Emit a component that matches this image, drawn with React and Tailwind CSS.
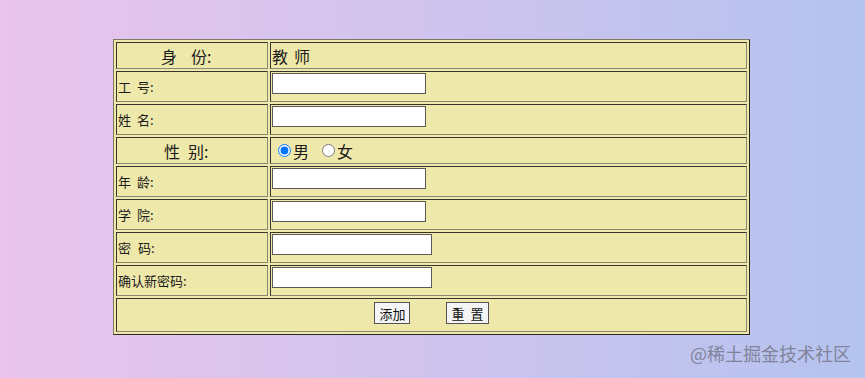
import React from "react";

const font = { fontFamily: '"Noto Sans CJK SC", "Microsoft YaHei", "Noto Sans", sans-serif' };

function Label({ a, b, gap }) {
  return (
    <span className="inline-flex items-center">
      <span>{a}</span>
      <span style={{ marginLeft: gap }}>{b}</span>
    </span>
  );
}

function TextInput({ w = "w-[154px]", type = "text" }) {
  return (
    <input
      type={type}
      className={`${w} h-[21px] bg-white border border-[#5b5b55] block outline-none`}
    />
  );
}

const cell = "border border-[#8a8672] [border-style:inset] p-0";

export default function App() {
  return (
    <div
      className="relative w-full h-[378px] bg-linear-to-r from-[#e9c4ec] to-[#b4c3ef] overflow-hidden"
      style={font}
    >
      <div className="pt-[39px] pl-[113px]">
        <table className="w-[637px] border-separate border-spacing-[2px] border border-[#7c7862] [border-style:outset] bg-[#eee8aa] text-[#1a1a1a]">
          <tbody>
            <tr>
              <td className={`${cell} w-[152px] h-[27px] pl-[44px] text-[16px] leading-none`}>
                <Label a="身" b="份:" gap="14px" />
              </td>
              <td className={`${cell} h-[27px] pl-[1px] text-[16px] leading-none`}>
                <Label a="教" b="师" gap="6px" />
              </td>
            </tr>
            <tr>
              <td className={`${cell} h-[31px] pl-[1px] text-[13px] leading-none`}>
                <Label a="工" b="号:" gap="6px" />
              </td>
              <td className={`${cell} h-[31px] pl-[1px] pt-[1px] align-top`}>
                <TextInput />
              </td>
            </tr>
            <tr>
              <td className={`${cell} h-[31px] pl-[1px] text-[13px] leading-none`}>
                <Label a="姓" b="名:" gap="6px" />
              </td>
              <td className={`${cell} h-[31px] pl-[1px] pt-[1px] align-top`}>
                <TextInput />
              </td>
            </tr>
            <tr>
              <td className={`${cell} h-[27px] pl-[47px] text-[16px] leading-none`}>
                <Label a="性" b="别:" gap="8px" />
              </td>
              <td className={`${cell} h-[27px] pl-[1px] text-[16px] leading-none`}>
                <span className="inline-flex items-center">
                  <input type="radio" name="sex" defaultChecked className="w-[13px] h-[13px] ml-[6px] mr-[2px] accent-[#0075ff]" />
                  <span>男</span>
                  <input type="radio" name="sex" className="w-[13px] h-[13px] ml-[13px] mr-[2px]" />
                  <span>女</span>
                </span>
              </td>
            </tr>
            <tr>
              <td className={`${cell} h-[31px] pl-[1px] text-[13px] leading-none`}>
                <Label a="年" b="龄:" gap="6px" />
              </td>
              <td className={`${cell} h-[31px] pl-[1px] pt-[1px] align-top`}>
                <TextInput />
              </td>
            </tr>
            <tr>
              <td className={`${cell} h-[31px] pl-[1px] text-[13px] leading-none`}>
                <Label a="学" b="院:" gap="6px" />
              </td>
              <td className={`${cell} h-[31px] pl-[1px] pt-[1px] align-top`}>
                <TextInput />
              </td>
            </tr>
            <tr>
              <td className={`${cell} h-[31px] pl-[1px] text-[13px] leading-none`}>
                <Label a="密" b="码:" gap="7px" />
              </td>
              <td className={`${cell} h-[31px] pl-[1px] pt-[1px] align-top`}>
                <TextInput w="w-[160px]" type="password" />
              </td>
            </tr>
            <tr>
              <td className={`${cell} h-[31px] pl-[1px] text-[13px] leading-none`}>
                确认新密码:
              </td>
              <td className={`${cell} h-[31px] pl-[1px] pt-[1px] align-top`}>
                <TextInput w="w-[160px]" type="password" />
              </td>
            </tr>
            <tr>
              <td colSpan={2} className={`${cell} h-[34px] text-center align-top pt-[3px]`}>
                <div className="flex justify-center gap-[36px]">
                  <button className="h-[22px] px-[4px] text-[13px] leading-none bg-[#f4f4f4] border border-[#555] text-[#111]">
                    添加
                  </button>
                  <button className="h-[22px] px-[4px] text-[13px] leading-none bg-[#f4f4f4] border border-[#555] text-[#111]">
                    <Label a="重" b="置" gap="6px" />
                  </button>
                </div>
              </td>
            </tr>
          </tbody>
        </table>
      </div>
      <div className="absolute left-[690px] top-[344px] text-[18px] leading-none text-[#80839a] whitespace-nowrap">
        @稀土掘金技术社区
      </div>
    </div>
  );
}
